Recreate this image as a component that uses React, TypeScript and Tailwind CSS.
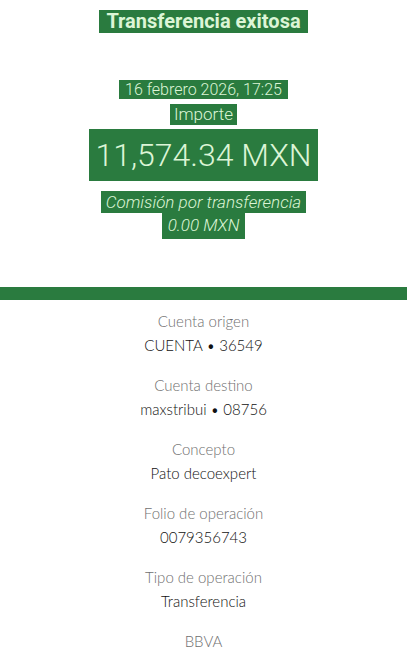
const rows = [
  { label: "Cuenta origen", value: "CUENTA • 36549" },
  { label: "Cuenta destino", value: "maxstribui • 08756" },
  { label: "Concepto", value: "Pato decoexpert" },
  { label: "Folio de operación", value: "0079356743" },
  { label: "Tipo de operación", value: "Transferencia" },
];

function Mark({ children, className }: any) {
  return (
    <span className={`inline-block bg-[#2a7b3f] text-[#dcf5d6] ${className}`}>
      {children}
    </span>
  );
}

export default function App() {
  return (
    <div className="bg-white w-[407px] h-[661px] overflow-hidden font-['Lato',sans-serif]">
      {/* --- HEADER --- */}
      <div className="flex flex-col items-center pt-[10px] font-['Roboto',sans-serif]">
        <Mark className="px-[7px] h-[23px] text-[20px] leading-[23px] font-bold">
          Transferencia exitosa
        </Mark>
        <Mark className="mt-[47px] px-[6px] h-[19px] text-[16px] leading-[19px] font-light">
          16 febrero 2026, 17:25
        </Mark>
        <Mark className="mt-[5px] px-[4px] h-[21px] text-[17px] leading-[21px] font-light">
          Importe
        </Mark>
        <Mark className="mt-[4px] px-[6px] h-[52px] text-[32px] leading-[52px] font-light">
          11,574.34 MXN
        </Mark>
        <Mark className="mt-[10px] px-[5px] h-[22px] text-[17px] leading-[22px] font-light italic">
          Comisión por transferencia
        </Mark>
        <Mark className="px-[6px] h-[26px] text-[17px] leading-[24px] font-light italic">
          0.00 MXN
        </Mark>
      </div>

      {/* --- GREEN BAR --- */}
      <div className="mt-[48px] h-[13px] bg-[#2a7b3f]"></div>

      {/* --- DETAILS --- */}
      <div className="flex flex-col items-center pt-[9px] text-[15px] font-light">
        {rows.map((r) => (
          <div key={r.label} className="flex flex-col items-center h-[64px]">
            <span className="text-[#6f6f6f] leading-[24px]">{r.label}</span>
            <span className="text-[#111] leading-[24px]">{r.value}</span>
          </div>
        ))}
        <span className="text-[#6f6f6f] leading-[24px]">BBVA</span>
      </div>
    </div>
  );
}
